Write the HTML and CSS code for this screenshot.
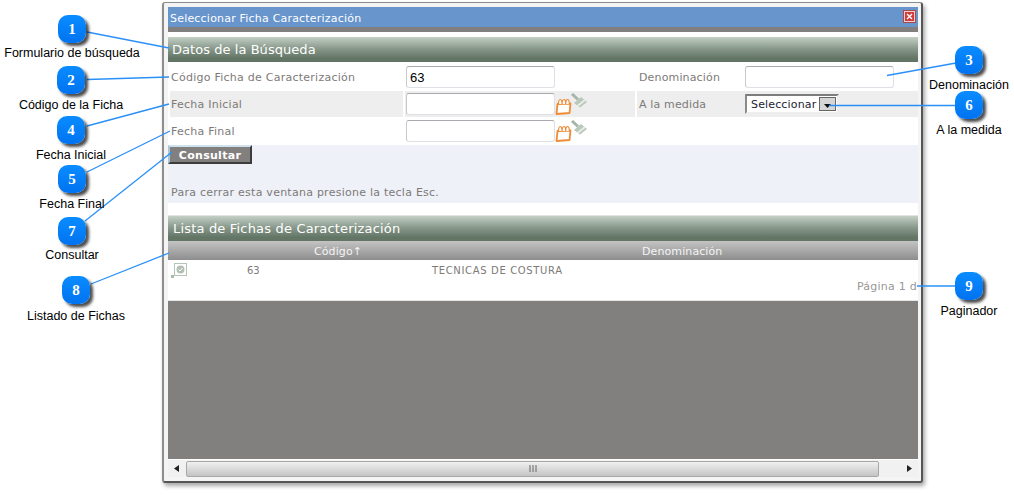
FILE: index.html
```html
<!DOCTYPE html>
<html lang="es">
<head>
<meta charset="utf-8">
<title>Seleccionar Ficha Caracterización</title>
<link rel="stylesheet" href="styles.css">
</head>
<body>
<div class="canvas">
  <section class="window">
    <header class="titlebar"><span>Seleccionar Ficha Caracterización</span><span class="close"><svg width="9" height="9" viewBox="0 0 9 9"><path d="M2 2l5 5M7 2l-5 5" stroke="#fff" stroke-width="1.4"/></svg></span></header>
    <div class="strip"></div>
    <div class="content">
      <h2 class="band band-form">Datos de la Búsqueda</h2>
      <div class="form-row row-a">
        <div class="cell-label">Código Ficha de Caracterización</div>
        <div class="cell-field"><input class="text" type="text" value="63"></div>
        <div class="cell-label2">Denominación</div>
        <div class="cell-field2"><input class="text" type="text"></div>
      </div>
      <div class="form-row row-b">
        <div class="cell-label shaded">Fecha Inicial</div>
        <div class="cell-field shaded"><input class="text" type="text">
          <svg class="cal" width="17" height="18" viewBox="0 0 17 18"><path d="M2.500 6L15.500 5.500 14.500 15 1.500 16z" fill="#fff" stroke="#ef8a35" stroke-width="1.800" stroke-linejoin="round"/><path d="M3.500 6a1.800 4.500 0 0 1 3.600 0M7.100 6a1.800 4.500 0 0 1 3.600 0M10.700 6a1.800 4.500 0 0 1 3.600 0" fill="#fff" stroke="#ef8a35" stroke-width="1.200"/></svg>
          <svg class="brush" width="16" height="16" viewBox="0 0 16 16"><path d="M1 1l6 5.500" stroke="#a4b6a7" stroke-width="3"/><path d="M3 10l7-6 6 5-7 5.500z" fill="#b9c8bb"/><path d="M6 12.300l7-5.700 1.500 1.200-7 5.600z" fill="#e8ede7"/></svg>
        </div>
        <div class="cell-label2 shaded">A la medida</div>
        <div class="cell-field2 shaded"><div class="select"><span class="select-text">Seleccionar</span><span class="arrow"><svg width="7" height="4" viewBox="0 0 7 4"><path d="M0 0h7L3.500 4z" fill="#111"/></svg></span></div></div>
      </div>
      <div class="form-row row-c">
        <div class="cell-label">Fecha Final</div>
        <div class="cell-field"><input class="text" type="text">
          <svg class="cal" width="17" height="18" viewBox="0 0 17 18"><path d="M2.500 6L15.500 5.500 14.500 15 1.500 16z" fill="#fff" stroke="#ef8a35" stroke-width="1.800" stroke-linejoin="round"/><path d="M3.500 6a1.800 4.500 0 0 1 3.600 0M7.100 6a1.800 4.500 0 0 1 3.600 0M10.700 6a1.800 4.500 0 0 1 3.600 0" fill="#fff" stroke="#ef8a35" stroke-width="1.200"/></svg>
          <svg class="brush" width="16" height="16" viewBox="0 0 16 16"><path d="M1 1l6 5.500" stroke="#a4b6a7" stroke-width="3"/><path d="M3 10l7-6 6 5-7 5.500z" fill="#b9c8bb"/><path d="M6 12.300l7-5.700 1.500 1.200-7 5.600z" fill="#e8ede7"/></svg>
        </div>
      </div>
      <div class="actions">
        <button class="btn" type="button">Consultar</button>
        <p class="hint">Para cerrar esta ventana presione la tecla Esc.</p>
      </div>
      <div class="gap"></div>
      <h2 class="band band-list">Lista de Fichas de Caracterización</h2>
      <div class="cols"><span class="col-code">Código↑</span><span class="col-name">Denominación</span></div>
      <div class="list-row">
        <svg class="check" width="16" height="16" viewBox="0 0 16 16"><rect x="3.500" y="0.500" width="12" height="12" fill="#fff" stroke="#b4c4b6"/><circle cx="9.500" cy="6.500" r="4" fill="#b3bfb4"/><path d="M7.500 6.500l1.500 1.500 2.500-3" stroke="#fff" fill="none"/><rect x="0" y="12" width="3" height="3" fill="#a9bdae"/></svg>
        <span class="cell-code">63</span><span class="cell-name">TECNICAS DE COSTURA</span>
      </div>
      <div class="pager"><span>Página 1 d</span></div>
      <div class="overlay"></div>
      <div class="hscroll">
        <svg class="sa" width="5" height="7" viewBox="0 0 5 7"><path d="M5 0v7L0 3.500z" fill="#222"/></svg>
        <div class="thumb"><svg width="8" height="7" viewBox="0 0 8 7"><path d="M1 0v7M4 0v7M7 0v7" stroke="#666"/></svg></div>
        <svg class="sa" width="5" height="7" viewBox="0 0 5 7"><path d="M0 0v7l5-3.500z" fill="#222"/></svg>
      </div>
    </div>
  </section>

  <svg class="lines" width="1014" height="495" viewBox="0 0 1014 495">
    <g stroke="#2a90f8" stroke-width="1.300" fill="none">
      <path d="M87 32L169 48"/>
      <path d="M87 79.500L169 77"/>
      <path d="M956 63L887 75.500"/>
      <path d="M87 126L169 104"/>
      <path d="M87 172L170 131"/>
      <path d="M956 105.500H829"/>
      <path d="M85 221L172 152"/>
      <path d="M91 284L169 253"/>
      <path d="M956 286H917"/>
    </g>
  </svg>

  <div class="callout c1"><span class="badge">1</span><span class="cap">Formulario de búsqueda</span></div>
  <div class="callout c2"><span class="badge">2</span><span class="cap">Código de la Ficha</span></div>
  <div class="callout c3"><span class="badge">3</span><span class="cap">Denominación</span></div>
  <div class="callout c4"><span class="badge">4</span><span class="cap">Fecha Inicial</span></div>
  <div class="callout c5"><span class="badge">5</span><span class="cap">Fecha Final</span></div>
  <div class="callout c6"><span class="badge">6</span><span class="cap">A la medida</span></div>
  <div class="callout c7"><span class="badge">7</span><span class="cap">Consultar</span></div>
  <div class="callout c8"><span class="badge">8</span><span class="cap">Listado de Fichas</span></div>
  <div class="callout c9"><span class="badge">9</span><span class="cap">Paginador</span></div>
</div>
</body>
</html>
```
FILE: styles.css
```css
* { box-sizing: border-box; }
html, body { margin: 0; padding: 0; background: #fff; }
.canvas { position: relative; width: 1014px; height: 495px; overflow: hidden; font-family: "DejaVu Sans", Verdana, sans-serif; }

/* window on the canvas */
.window {
  position: absolute; left: 162px; top: 2px; width: 761px; height: 481px;
  padding: 4px 3px 4px 4px;
  background: #f4f4f4;
  border: 1px solid #8d8d8d;
  border-left-width: 2px;
  border-right: 2px solid #555;
  border-bottom: 2px solid #555;
  border-radius: 3px;
  box-shadow: 2px 3px 4px rgba(0,0,0,.35);
  display: flex; flex-direction: column;
}
.titlebar {
  height: 20px; flex: none; padding: 2px 1px 0 2px;
  background: #6795cc; color: #fff; font-size: 11px; letter-spacing: .2px;
  display: flex; align-items: center; justify-content: space-between;
}
.close {
  width: 11px; height: 11px; background: #cf3c3c; border: 1px solid #f1d0d0;
  display: flex; align-items: center; justify-content: center;
  outline: 1px solid #a94a4a; margin: -3px 2px 0 0;
}
.strip { height: 5px; flex: none; background: #82807e; }
.content { flex: 1; display: flex; flex-direction: column; background: #fff; padding-top: 5px; min-height: 0; }

.band {
  margin: 0; height: 25px; flex: none; font-weight: normal; font-size: 13px; color: #fff;
  display: flex; align-items: center;
  background: linear-gradient(#c3cfc5 0%, #8a9a8d 45%, #637666 85%, #637666 100%);
}
.band-form { padding: 0 0 0 4px; letter-spacing: .05px; }
.band-list { padding: 0 0 0 5px; letter-spacing: .18px; }

.form-row { display: grid; grid-template-columns: 237px 232px 107px 174px; flex: none; color: #7d7a78; font-size: 11px; }
.row-a { height: 29px; }
.row-b { height: 26px; }
.row-c { height: 28px; }
.form-row > div { display: flex; align-items: center; position: relative; }
.cell-label { padding-left: 3px; letter-spacing: .25px; }
.cell-field { padding-left: 1px; }
.cell-label2 { padding-left: 2px; letter-spacing: .15px; }
.cell-field2 { padding-left: 1px; }
.row-b .cell-label { margin: 0 2px 0 2px; padding-left: 1px; }
.row-b .cell-field { margin-right: 2px; }
.shaded { background: #eeeeee; }
.row-a > div, .row-c > div { align-items: flex-start; padding-top: 4px; }
.row-a .cell-label, .row-a .cell-label2 { padding-top: 9px; }
.row-c > div { padding-top: 3px; }
.row-c .cell-label { padding-top: 8px; padding-left: 3px; }

.text {
  width: 149px; height: 22px; margin: 0; padding: 0 3px;
  border: 1px solid #dfe0e6; border-top-color: #aaa9b0; border-left-color: #c9c9cf; border-radius: 3px;
  background: #fff; font: 13px "Liberation Sans", Arial, sans-serif; color: #000;
}
.cal { flex: none; margin: 6px 0 0 0; }
.brush { flex: none; margin: -6px 0 0 -1px; }
.row-c .cal { margin-top: 5px; }
.row-c .brush { margin-top: 0; }

.select {
  width: 94px; height: 20px; display: flex; align-items: center; justify-content: space-between;
  background: #fff; color: #223; font-size: 11px; padding: 0 1px 0 4px; letter-spacing: .15px;
  border: 2px solid #8a8a8a; border-right-color: #eee; border-bottom-color: #eee;
  border-top-color: #7d7d7d;
}
.select-text { padding-top: 1px; }
.arrow {
  width: 17px; height: 14px; background: #d6d6d6; border: 1px solid #666;
  display: flex; align-items: center; justify-content: center; padding-top: 4px;
}

.actions { height: 58px; flex: none; background: #eef1f7; display: flex; flex-direction: column; align-items: flex-start; }
.btn {
  height: 19px; width: 84px; padding: 1px 0 0; margin: 0;
  background: #82807e; color: #fff; font: bold 11px "DejaVu Sans", Verdana, sans-serif; letter-spacing: .3px;
  border: 2px solid #3c3c3c; border-top: 2px solid #cfe2ee; border-left: 2px solid #a8c6da;
}
.hint { margin: 22px 0 0 3px; color: #7d7a78; font-size: 11px; letter-spacing: .25px; }
.gap { height: 13px; flex: none; background: #fff; border-bottom: 1px solid #e3e3e3; }

.cols {
  height: 19px; flex: none; display: flex; align-items: center; color: #f4f4f4; font-size: 11px; padding-top: 2px;
  background: linear-gradient(#c4c4c4, #8d8d8d);
}
.col-code { margin-left: 146px; width: 328px; letter-spacing: .1px; }
.col-name { letter-spacing: .1px; }
.list-row { height: 20px; flex: none; display: flex; align-items: center; color: #7d7a78; font-size: 11px; position: relative; padding-top: 1px; }
.check { position: absolute; left: 3px; top: 3px; }
.cell-code { margin-left: 79px; width: 185px; font-size: 10px; }
.cell-name { font-size: 10px; letter-spacing: .65px; }
.pager { height: 21px; flex: none; display: flex; justify-content: flex-end; color: #9a9795; font-size: 11px; padding: 0 1px 7px 0; align-items: center; letter-spacing: .25px; border-bottom: 1px solid #e6e6e6; }
.overlay { flex: 1; background: #82807e; min-height: 0; }
.hscroll {
  height: 18px; flex: none; background: #f1f1f1; display: flex; align-items: center; padding: 0 7px 0 6px;
  border-top: 1px solid #fff;
}
.hscroll .sa { flex: none; }
.thumb {
  flex: none; width: 693px; height: 16px; margin: 0 28px 0 7px;
  border: 1px solid #a8a8a8; border-radius: 2px;
  background: linear-gradient(#f0f0f0, #dcdcdc 45%, #c4c4c4);
  display: flex; align-items: center; justify-content: center;
}

/* callouts: pins on the canvas */
.lines { position: absolute; left: 0; top: 0; pointer-events: none; }
.callout { position: absolute; width: 140px; display: flex; flex-direction: column; align-items: center; }
.badge {
  width: 28px; height: 28px; border-radius: 10px; flex: none;
  background: linear-gradient(#0a8cff, #0073f0);
  box-shadow: 3px 3px 3px rgba(0,0,0,.7);
  color: #fff; font: bold 15px "Liberation Serif", "Times New Roman", serif;
  display: flex; align-items: center; justify-content: center;
}
.cap { margin-top: 3px; font: 12.500px/14px "Liberation Sans", Arial, sans-serif; color: #000; white-space: nowrap; }
.c1 { left: 2px; top: 15px; }
.c2 { left: 1px; top: 66px; }
.c2 .cap { margin-top: 4px; }
.c4 { left: 1px; top: 116px; }
.c4 .cap { margin-top: 4px; }
.c5 { left: 2px; top: 165px; }
.c5 .cap { margin-top: 4px; }
.c7 { left: 2px; top: 217px; }
.c8 { left: 6px; top: 276px; }
.c8 .cap { margin-top: 5px; }
.c3 { left: 899px; top: 46px; }
.c3 .cap { margin-top: 4px; }
.c6 { left: 899px; top: 91px; }
.c6 .cap { margin-top: 4px; }
.c9 { left: 899px; top: 272px; }
.c9 .cap { margin-top: 4px; }
```
